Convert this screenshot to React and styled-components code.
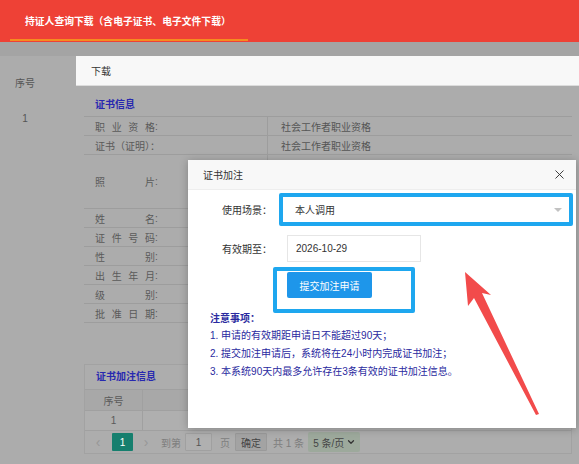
import React from "react";
import styled, { createGlobalStyle } from "styled-components";
import { X, ChevronDown } from "lucide-react";

const GlobalStyle = createGlobalStyle`
  html, body { margin: 0; padding: 0; }
  body {
    width: 579px;
    height: 464px;
    overflow: hidden;
    font-family: "Liberation Sans", "Noto Sans CJK SC", sans-serif;
    background: #acacac;
  }
  * { box-sizing: border-box; }
`;

const Page = styled.div`
  position: relative;
  width: 579px;
  height: 464px;
  overflow: hidden;
  background: #acacac;
`;

const Header = styled.header`
  height: 42px;
  background: #ee4136;
  display: flex;
  padding-left: 10px;
`;

const Tab = styled.div`
  height: 41px;
  padding: 3px 17px 0 15px;
  display: flex;
  align-items: center;
  border-bottom: 2px solid #f68b1f;
  color: #fff;
  font-weight: bold;
  font-size: 9.8px;
`;

const Backdrop = styled.main`
  height: 422px;
  padding-top: 30px;
  background: linear-gradient(#a4a4a4 0 14px, #acacac 14px);
`;

const ListRow = styled.div`
  display: flex;
  height: 20px;
  margin-bottom: ${(p) => p.gap || 0}px;
  align-items: center;
`;

const ListCell = styled.div`
  width: 50px;
  text-align: center;
  font-size: 10px;
  color: #555;
`;

/* outer dialog */
const Dialog = styled.section`
  position: absolute;
  left: 76px;
  top: 56px;
  width: 515px;
  height: 420px;
  background: #acacac;
`;

const DialogTitle = styled.div`
  height: 30px;
  background: #f8f8f8;
  border-bottom: 1px solid #dcdcdc;
  padding-left: 15px;
  display: flex;
  align-items: center;
  font-size: 10px;
  color: #333;
`;

const DialogBody = styled.div`
  padding: 0 19px 0 8px;
`;

const SectionTitle = styled.div`
  height: ${(p) => p.h}px;
  display: flex;
  align-items: ${(p) => (p.center ? "center" : "flex-end")};
  padding: 0 0 ${(p) => (p.center ? 0 : 5)}px 11px;
  font-size: 10px;
  line-height: 12px;
  font-weight: bold;
  color: #2828b0;
`;

const InfoTable = styled.div`
  border-bottom: 1px solid #9d9d9d;
`;

const InfoRow = styled.div`
  display: grid;
  grid-template-columns: 184px 1fr;
  height: ${(p) => p.h || 19}px;
  border-top: 1px solid #9d9d9d;
`;

const LabelCell = styled.div`
  display: flex;
  align-items: center;
  padding-left: 11px;
  border-right: 1px solid #9d9d9d;
  font-size: 10px;
  color: #5a5a5a;
`;

const Spread = styled.span`
  width: 60px;
  display: flex;
  justify-content: space-between;
`;

const ValueCell = styled.div`
  display: flex;
  align-items: center;
  padding-left: 13px;
  font-size: 10px;
  color: #555;
`;

const Panel = styled.div`
  margin-top: 41px;
  border: 1px solid #a2a2a2;
  background: #adadad;
`;

const GridRow = styled.div`
  display: flex;
  height: ${(p) => p.h}px;
  background: ${(p) => p.bg};
  border-top: 1px solid #a0a0a0;
`;

const GridCell = styled.div`
  width: 58px;
  display: flex;
  align-items: center;
  justify-content: center;
  border-right: 1px solid #a0a0a0;
  font-size: 10px;
  color: #5a5a5a;
`;

const Pager = styled.div`
  display: flex;
  align-items: center;
  height: 23px;
  border-top: 1px solid #a0a0a0;
  font-size: 10px;
  color: #7d7d7d;
`;

const PagerItem = styled.span`
  margin-left: ${(p) => p.ml}px;
  width: ${(p) => (p.w ? `${p.w}px` : "auto")};
  text-align: center;
`;

const Arrow = styled.span`
  margin-left: ${(p) => p.ml}px;
  width: 10px;
  text-align: center;
  color: #979797;
  font-size: 14px;
  line-height: 14px;
`;

const PageBtn = styled.span`
  margin-left: ${(p) => p.ml}px;
  width: ${(p) => p.w}px;
  height: ${(p) => p.h || 18}px;
  display: flex;
  align-items: center;
  justify-content: center;
  background: ${(p) => p.bg};
  border: ${(p) => (p.border ? `1px solid ${p.border}` : "none")};
  color: ${(p) => p.color};
  border-radius: 1px;
`;

const SizeSelect = styled.span`
  margin-left: 4px;
  width: 52px;
  height: 20px;
  display: flex;
  align-items: center;
  justify-content: space-between;
  padding: 0 4px 0 5px;
  background: #9da99c;
  color: #444;
  border-radius: 2px;
`;

/* inner dialog */
const Modal = styled.section`
  position: absolute;
  left: 188px;
  top: 160px;
  width: 388px;
  height: 268px;
  background: #fff;
  box-shadow: 0 1px 8px rgba(0, 0, 0, 0.25);
`;

const ModalTitle = styled.div`
  height: 30px;
  display: flex;
  align-items: center;
  justify-content: space-between;
  padding: 0 9px 0 15px;
  background: #f8f8f8;
  border-bottom: 1px solid #eee;
  font-size: 10px;
  color: #333;
`;

const ModalBody = styled.div`
  padding: 3px 3px 0 0;
`;

const FormRow = styled.div`
  display: flex;
  align-items: ${(p) => p.align || "center"};
  margin-top: ${(p) => p.mt || 0}px;
`;

const FormLabel = styled.label`
  width: 84px;
  text-align: right;
  font-size: 10px;
  color: #333;
`;

const Highlight = styled.div`
  margin-left: ${(p) => p.ml}px;
  width: ${(p) => (p.w ? `${p.w}px` : "auto")};
  flex: ${(p) => (p.w ? "none" : 1)};
  height: ${(p) => p.h}px;
  border: 4px solid #1ea7ef;
  border-radius: 2px;
`;

const Select = styled.div`
  height: 100%;
  display: flex;
  align-items: center;
  justify-content: space-between;
  padding: 0 7px 0 12px;
  font-size: 10px;
  color: #333;
  background: #fff;
`;

const Caret = styled.span`
  width: 0;
  height: 0;
  border-left: 4px solid transparent;
  border-right: 4px solid transparent;
  border-top: 4px solid #c2c2c2;
`;

const DateInput = styled.div`
  margin-left: 15px;
  width: 134px;
  height: 27px;
  border: 1px solid #e6e6e6;
  display: flex;
  align-items: center;
  padding-left: 8px;
  font-size: 10px;
  color: #333;
`;

const SubmitButton = styled.button`
  margin: 1px 0 0 10px;
  width: 85px;
  height: 26px;
  border: none;
  border-radius: 2px;
  background: #1e96ea;
  color: #fff;
  font-family: inherit;
  font-size: 10px;
  padding: 0;
`;

const Notes = styled.div`
  padding-left: 22px;
  color: #2a2aa0;
  font-size: 10px;
`;

const NotesTitle = styled.div`
  font-weight: bold;
  line-height: 12px;
  margin-bottom: 2px;
`;

const NoteLine = styled.div`
  line-height: 18px;
`;

const Annotation = styled.svg`
  position: absolute;
  left: 0;
  top: 0;
  pointer-events: none;
`;

const Label = ({ text }) => (
  <LabelCell>
    <Spread>
      {text.split("").map((c, i) => (
        <span key={i}>{c}</span>
      ))}
    </Spread>
    :
  </LabelCell>
);

const rows = [
  { label: "职业资格", value: "社会工作者职业资格" },
  { raw: "证书（证明）：", value: "社会工作者职业资格" },
  { label: "照片", h: 54 },
  { label: "姓名" },
  { label: "证件号码" },
  { label: "性别" },
  { label: "出生年月" },
  { label: "级别" },
  { label: "批准日期" },
];

const notes = [
  "1. 申请的有效期距申请日不能超过90天；",
  "2. 提交加注申请后，系统将在24小时内完成证书加注；",
  "3. 本系统90天内最多允许存在3条有效的证书加注信息。",
];

export default function App() {
  return (
    <Page>
      <GlobalStyle />
      <Header>
        <Tab>持证人查询下载（含电子证书、电子文件下载）</Tab>
      </Header>
      <Backdrop>
        <ListRow gap={16}>
          <ListCell>序号</ListCell>
        </ListRow>
        <ListRow>
          <ListCell>1</ListCell>
        </ListRow>
      </Backdrop>

      <Dialog>
        <DialogTitle>下载</DialogTitle>
        <DialogBody>
          <SectionTitle h={30}>证书信息</SectionTitle>
          <InfoTable>
            {rows.map((r, i) => (
              <InfoRow key={i} h={r.h}>
                {r.raw ? <LabelCell>{r.raw}</LabelCell> : <Label text={r.label} />}
                <ValueCell>{r.value}</ValueCell>
              </InfoRow>
            ))}
          </InfoTable>
          <Panel>
            <SectionTitle h={24} center>
              证书加注信息
            </SectionTitle>
            <GridRow h={21} bg="#a8a8a8">
              <GridCell>序号</GridCell>
            </GridRow>
            <GridRow h={20} bg="#afafaf">
              <GridCell>1</GridCell>
            </GridRow>
            <Pager>
              <Arrow ml={8}>‹</Arrow>
              <PageBtn ml={9} w={21} bg="#167f6e" color="#fff">
                1
              </PageBtn>
              <Arrow ml={8}>›</Arrow>
              <PagerItem ml={10}>到第</PagerItem>
              <PageBtn ml={4} w={27} bg="#b0b0b0" border="#a0a0a0" color="#555">
                1
              </PageBtn>
              <PagerItem ml={8}>页</PagerItem>
              <PageBtn ml={5} w={32} bg="#a3a3a3" border="#9a9a9a" color="#444">
                确定
              </PageBtn>
              <PagerItem ml={6}>共 1 条</PagerItem>
              <SizeSelect>
                5 条/页
                <ChevronDown size={10} strokeWidth={3} color="#333" />
              </SizeSelect>
            </Pager>
          </Panel>
        </DialogBody>
      </Dialog>

      <Modal>
        <ModalTitle>
          证书加注
          <X size={15} strokeWidth={1.5} color="#333" />
        </ModalTitle>
        <ModalBody>
          <FormRow>
            <FormLabel>使用场景：</FormLabel>
            <Highlight ml={7} h={33}>
              <Select>
                本人调用
                <Caret />
              </Select>
            </Highlight>
          </FormRow>
          <FormRow mt={9}>
            <FormLabel>有效期至：</FormLabel>
            <DateInput>2026-10-29</DateInput>
          </FormRow>
          <FormRow mt={5} align="flex-start">
            <Highlight ml={85} w={142} h={46}>
              <SubmitButton>提交加注申请</SubmitButton>
            </Highlight>
          </FormRow>
          <Notes>
            <NotesTitle>注意事项：</NotesTitle>
            {notes.map((n) => (
              <NoteLine key={n}>{n}</NoteLine>
            ))}
          </Notes>
        </ModalBody>
      </Modal>

      <Annotation width="579" height="464" viewBox="0 0 579 464">
        <polygon
          points="465,272 491,295 482,293 539,414 536,415 474,298 468,306"
          fill="#f24b4b"
        />
      </Annotation>
    </Page>
  );
}
